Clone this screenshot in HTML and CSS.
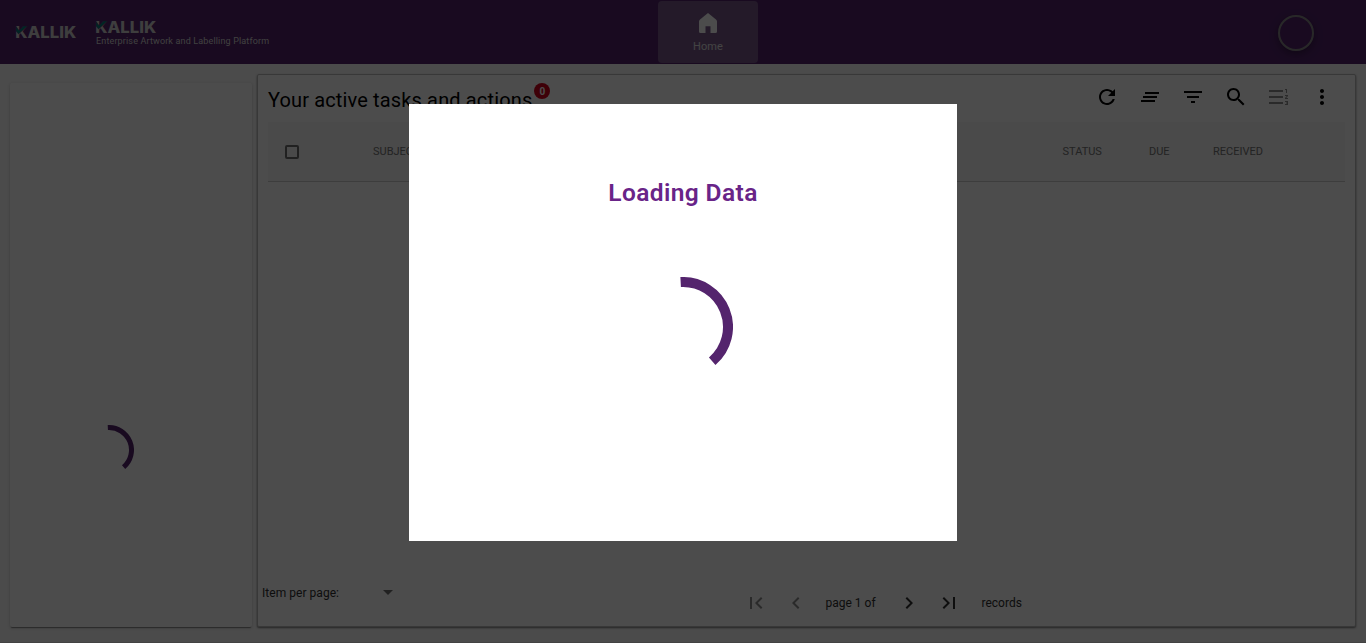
FILE: index.html
```html
<!DOCTYPE html>
<html lang="en">
<head>
<meta charset="utf-8">
<title>Kallik</title>
<link rel="stylesheet" href="styles.css">
</head>
<body>
<div class="app">
  <header class="topbar">
    <svg class="logo logo-small" viewBox="0 0 60 12"><text x="-0.8" y="11.5" textLength="61" lengthAdjust="spacingAndGlyphs">KALLIK</text><path class="tick" d="M0 0.500V5l2.500 3L11.500 0H7.500L3 4.500z"/></svg>
    <div class="brand">
      <svg class="logo" viewBox="0 0 60 12"><text x="-0.8" y="11.5" textLength="61" lengthAdjust="spacingAndGlyphs">KALLIK</text><path class="tick" d="M0 0.500V5l2.500 3L11.500 0H7.500L3 4.500z"/></svg>
      <span class="tagline">Enterprise Artwork and Labelling Platform</span>
    </div>
    <div class="home">
      <svg viewBox="0 0 18 20"><path d="M9 0L1 6.500Q0 7.300 0 8.500V18.500Q0 20 1.500 20H6.500V13.200H11.500V20H16.500Q18 20 18 18.500V8.500Q18 7.300 17 6.500z"/></svg>
      <span>Home</span>
    </div>
    <div class="avatar"></div>
  </header>
  <main class="content">
    <aside class="side card">
      <svg class="side-spinner" viewBox="0 0 100 100"><path d="M47.650 5.060A45 45 0 0 1 79.220 84.220"/></svg>
    </aside>
    <section class="panel card">
      <div class="panel-head">
        <h2>Your active tasks and actions</h2><span class="badge">0</span>
        <div class="tools">
          <svg class="icon" viewBox="0 0 24 24"><path d="M17.650 6.350C16.200 4.900 14.210 4 12 4c-4.420 0-7.990 3.580-7.990 8s3.570 8 7.990 8c3.730 0 6.840-2.550 7.730-6h-2.080c-.82 2.330-3.040 4-5.650 4-3.310 0-6-2.690-6-6s2.690-6 6-6c1.660 0 3.140.69 4.220 1.780L13 11h7V4l-2.350 2.350z"/></svg>
          <svg class="icon" viewBox="0 0 24 24"><path d="M5 13h14v-2H5v2zm-2 4h14v-2H3v2zM7 7v2h14V7H7z"/></svg>
          <svg class="icon" viewBox="0 0 24 24"><path d="M10 18h4v-2h-4v2zM3 6v2h18V6H3zm3 7h12v-2H6v2z"/></svg>
          <svg class="icon" viewBox="0 0 24 24"><path d="M15.500 14h-.79l-.28-.27C15.410 12.590 16 11.110 16 9.500 16 5.910 13.090 3 9.500 3S3 5.910 3 9.500 5.910 16 9.500 16c1.610 0 3.090-.59 4.230-1.570l.27.28v.79l5 4.990L20.490 19l-4.990-5zm-6 0C7.010 14 5 11.990 5 9.500S7.010 5 9.500 5 14 7.010 14 9.500 11.990 14 9.500 14z"/></svg>
          <svg class="icon off" viewBox="0 0 24 24"><path d="M18 17h2v.5h-1v1h1v.5h-2v1h3v-4h-3v1zm1-9h1V4h-2v1h1v3zm-1 3h1.800L18 13.100v.9h3v-1h-1.800l1.800-2.100V10h-3v1zM2 5h14v2H2zm0 12h14v2H2zm0-6h14v2H2z"/></svg>
          <svg class="icon" viewBox="0 0 24 24"><path d="M12 8c1.100 0 2-.9 2-2s-.9-2-2-2-2 .9-2 2 .9 2 2 2zm0 2c-1.100 0-2 .9-2 2s.9 2 2 2 2-.9 2-2-.9-2-2-2zm0 6c-1.100 0-2 .9-2 2s.9 2 2 2 2-.9 2-2-.9-2-2-2z"/></svg>
        </div>
      </div>
      <div class="table-head">
        <span class="checkbox"></span>
        <span>SUBJECT</span>
        <span>STATUS</span>
        <span>DUE</span>
        <span>RECEIVED</span>
      </div>
      <footer class="pager">
        <span class="per-page">Item per page:</span>
        <span class="caret"></span>
        <div class="pages">
          <svg class="icon off" viewBox="0 0 24 24"><path d="M18.410 16.590L13.820 12l4.590-4.590L17 6l-6 6 6 6zM6 6h2v12H6z"/></svg>
          <svg class="icon off" viewBox="0 0 24 24"><path d="M15.410 7.410L14 6l-6 6 6 6 1.410-1.410L10.830 12z"/></svg>
          <span class="page-of">page 1 of</span>
          <svg class="icon" viewBox="0 0 24 24"><path d="M10 6L8.590 7.410 13.170 12l-4.580 4.590L10 18l6-6z"/></svg>
          <svg class="icon" viewBox="0 0 24 24"><path d="M5.590 7.410L10.180 12l-4.590 4.590L7 18l6-6-6-6zM16 6h2v12h-2z"/></svg>
          <span class="records">records</span>
        </div>
      </footer>
    </section>
  </main>
</div>
<div class="backdrop">
  <div class="dialog">
    <h1>Loading Data</h1>
    <svg class="spinner" viewBox="0 0 100 100"><path d="M47.650 5.060A45 45 0 0 1 79.220 84.220"/></svg>
  </div>
</div>
</body>
</html>
```
FILE: styles.css
```css
* { box-sizing: border-box; }
body { margin: 0; font-family: Roboto, sans-serif; overflow: hidden; }
svg { display: block; flex: none; }
.app { height: 643px; background: #fafafa; display: flex; flex-direction: column; border-bottom: 1px solid #dcdcdc; }

.topbar { height: 64px; flex: none; background: #54246d; display: flex; align-items: flex-start; padding-left: 16px; }
.logo { width: 60px; height: 12px; overflow: visible; }
.logo text { font: 800 15.500px Inter, sans-serif; fill: #d0d0d0; }
.tick { fill: #007f78; stroke: #54246d; stroke-width: .5; }
.logo-small { margin: 26px 20px 0 0; }
.brand { width: 562px; padding-top: 21px; }
.tagline { display: block; margin-top: 2px; font-size: 9px; line-height: 12px; color: #d8d8d8; white-space: nowrap; letter-spacing: .15px; }
.home { width: 100px; height: 62px; margin-top: 1px; border-radius: 4px; background: #7a588b; display: flex; flex-direction: column; align-items: center; padding-top: 12px; font-size: 11px; line-height: 14px; letter-spacing: .15px; }
.home svg { width: 18px; height: 20px; fill: #fff; }
.home span { margin-top: 7px; color: #e0e0e0; }
.avatar { width: 36px; height: 36px; margin: 15px 0 0 520px; border: 2px solid #888; border-radius: 50%; box-shadow: 0 3px 8px rgba(0, 0, 0, .35); }

.content { flex: 1; display: flex; align-items: stretch; gap: 5px; padding: 10px 10px 15px; }
.card { background: #fff; border-radius: 2px; box-shadow: 0 1px 2px rgba(0, 0, 0, .5); }
.side { width: 242px; margin-top: 9px; padding: 342px 0 0 74px; box-shadow: 0 2px 1px -1px rgba(0, 0, 0, .35), 0 1px 3px rgba(0, 0, 0, .2); }
.side-spinner { width: 50px; height: 50px; }
.side-spinner path, .spinner path { fill: none; stroke: #54246d; stroke-width: 10; }
.panel { flex: 1; min-width: 0; border: 1px solid #bdbdbd; display: flex; flex-direction: column; }

.panel-head { height: 47px; display: flex; align-items: flex-start; padding: 8px 21px 0 10px; }
.panel-head h2 { margin: 4px 0 0; font-size: 20px; font-weight: 400; line-height: 26px; letter-spacing: .14px; color: #000; white-space: nowrap; }
.badge { width: 16px; height: 16px; margin-left: 2px; border-radius: 50%; background: #d0021b; color: #fff; font-size: 10px; font-weight: 700; line-height: 17px; text-align: center; }
.tools { display: flex; gap: 19px; margin: 2px 0 0 auto; }
.icon { width: 24px; height: 24px; fill: #000; }
.off { fill: #8c8c8c; }

.table-head { height: 60px; margin: 0 10px; background: #f7f7f7; border-bottom: 1px solid #ccc; display: grid; grid-template-columns: 105px 689.500px 86.500px 64px 1fr; align-items: center; font-size: 11px; color: #757575; }
.checkbox { width: 14px; height: 14px; margin: 1px 0 0 17px; border: 2px solid #707070; border-radius: 2px; }

.pager { margin-top: auto; height: 50px; padding-left: 4px; display: flex; align-items: flex-start; font-size: 12px; line-height: 14px; color: #303030; white-space: nowrap; }
.per-page { width: 121px; padding-top: 10px; letter-spacing: .04px; }
.caret { width: 10px; height: 5px; margin-top: 14px; background: #707070; clip-path: polygon(0 0, 100% 0, 50% 100%); }
.pages { display: flex; align-items: center; margin: 15px 0 0 351px; }
.pages .icon:not(.off) { fill: #303030; }
.pages .icon + .icon { margin-left: 16px; }
.page-of { width: 88.500px; padding-left: 17.500px; }
.records { padding-left: 21px; }

.backdrop { position: absolute; inset: 0; background: rgba(0, 0, 0, .7); display: flex; align-items: flex-start; justify-content: center; padding-top: 104px; }
.dialog { width: 548px; height: 437px; background: #fff; display: flex; flex-direction: column; align-items: center; }
.dialog h1 { margin: 73px 0 0; font-size: 24.500px; line-height: 32px; font-weight: 600; color: #692488; letter-spacing: .4px; }
.spinner { width: 100px; height: 100px; margin-top: 67.500px; }
```
